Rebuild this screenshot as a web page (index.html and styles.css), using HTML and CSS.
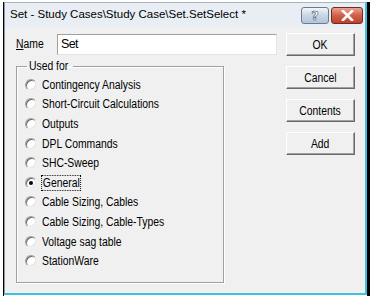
FILE: index.html
```html
<!DOCTYPE html>
<html lang="en">
<head>
    <meta charset="UTF-8">
    <title>Set Select</title>
    <link rel="stylesheet" href="styles.css">
</head>
<body>

    <div class="screen">
        <div class="edge-left"></div>

        <!-- Dialog window -->
        <div class="window">
            <div class="titlebar">
                <span class="title">Set - Study Cases\Study Case\Set.SetSelect *</span>
                <div class="caption-btns">
                    <button class="cap help-btn">?</button>
                    <button class="cap close-btn">
                        <svg width="13" height="11" viewBox="0 0 13 11">
                            <path d="M2 1 L11 10 M11 1 L2 10" stroke="#ffffff" stroke-width="2.6" stroke-linecap="square"/>
                        </svg>
                    </button>
                </div>
            </div>

            <div class="client">
                <div class="main-col">
                    <div class="name-row">
                        <label class="name-label"><span class="txt"><u>N</u>ame</span></label>
                        <input type="text" class="name-input" value="Set">
                    </div>

                    <fieldset class="group">
                        <legend><span class="txt">Used for</span></legend>
                        <div class="radio-row"><span class="radio"></span><span class="txt">Contingency Analysis</span></div>
                        <div class="radio-row"><span class="radio"></span><span class="txt">Short-Circuit Calculations</span></div>
                        <div class="radio-row"><span class="radio"></span><span class="txt">Outputs</span></div>
                        <div class="radio-row"><span class="radio"></span><span class="txt">DPL Commands</span></div>
                        <div class="radio-row"><span class="radio"></span><span class="txt">SHC-Sweep</span></div>
                        <div class="radio-row"><span class="radio checked"></span><span class="txt focus">General</span></div>
                        <div class="radio-row"><span class="radio"></span><span class="txt">Cable Sizing, Cables</span></div>
                        <div class="radio-row"><span class="radio"></span><span class="txt">Cable Sizing, Cable-Types</span></div>
                        <div class="radio-row"><span class="radio"></span><span class="txt">Voltage sag table</span></div>
                        <div class="radio-row"><span class="radio"></span><span class="txt">StationWare</span></div>
                    </fieldset>
                </div>

                <div class="btn-col">
                    <button class="btn"><span class="txt">OK</span></button>
                    <button class="btn"><span class="txt">Cancel</span></button>
                    <button class="btn"><span class="txt">Contents</span></button>
                    <button class="btn"><span class="txt">Add</span></button>
                </div>
            </div>
        </div>

        <div class="edge-right"></div>
    </div>

</body>
</html>
```

FILE: styles.css
```css
/* General */
body {
    margin: 0;
    width: 370px;
    height: 296px;
    overflow: hidden;
    background: #ffffff;
    font-family: 'Liberation Sans', sans-serif;
    font-size: 12.5px;
    color: #000000;
}

/* narrow dialog font */
.txt {
    display: inline-block;
    white-space: nowrap;
    transform: scaleX(0.83);
    transform-origin: left center;
}

.screen {
    display: flex;
    height: 296px;
    padding-top: 2px;
    box-sizing: border-box;
}

.edge-left {
    width: 3px;
    border-right: 1px solid #000000;
    background: #ffffff;
}

.edge-right {
    flex: 1;
    background: #000000;
}

/* Window frame */
.window {
    width: 363px;
    height: 293px;
    background: #f0f0f0;
    border: 1px solid #8c9aa8;
    border-top-color: #a8b4c0;
    border-right: 2px solid #40c0e0;
    border-bottom: 2px solid #40c0e0;
    box-sizing: border-box;
    display: flex;
    flex-direction: column;
}

.titlebar {
    height: 24px;
    background: #e9eef4;
    display: flex;
    align-items: flex-start;
    justify-content: space-between;
    padding-left: 5px;
}

.title {
    font-family: 'Liberation Sans', sans-serif;
    font-size: 11.5px;
    line-height: 22px;
    color: #000000;
}

.caption-btns {
    display: flex;
    gap: 2px;
    margin-top: 4px;
    margin-right: 2px;
}

.cap {
    height: 17px;
    border: 1px solid #6c7b8c;
    border-radius: 3px;
    padding: 0;
    display: flex;
    align-items: center;
    justify-content: center;
}

.help-btn {
    width: 28px;
    background: linear-gradient(#f0f5fa, #c8d6e6 50%, #b2c5da);
    color: #ffffff;
    font-family: 'DejaVu Sans', sans-serif;
    font-weight: bold;
    font-size: 13px;
    -webkit-text-stroke: 0.6px #4a5c70;
}

.close-btn {
    width: 32px;
    border-color: #6a2c24;
    background: linear-gradient(#e8a494, #d06048 50%, #c0402a);
}

/* Client area */
.client {
    flex: 1;
    display: flex;
    padding: 6px 0 0 11px;
}

.main-col {
    width: 261px;
}

.name-row {
    display: flex;
    align-items: center;
    height: 22px;
}

.name-label {
    width: 41px;
}

.name-input {
    width: 220px;
    height: 21px;
    box-sizing: border-box;
    border: 1px solid #a0a0a0;
    border-right-color: #e3e3e3;
    border-bottom-color: #e3e3e3;
    padding: 0 3px;
    font-family: inherit;
    font-size: inherit;
    letter-spacing: -0.6px;
    background: #ffffff;
}

/* Group box */
.group {
    width: 208px;
    height: 224px;
    box-sizing: border-box;
    margin: 4px 0 0 0;
    padding: 2px 0 0 8px;
    border: 1px solid #a0a0a0;
    box-shadow: 1px 1px 0 #ffffff, inset 1px 1px 0 #ffffff;
}

.group legend {
    padding: 0 2px;
    margin-left: 2px;
    line-height: 14px;
    width: 42px;
}

.radio-row {
    display: flex;
    align-items: center;
    height: 19.6px;
    gap: 5px;
}

.radio {
    width: 12px;
    height: 12px;
    box-sizing: border-box;
    border-radius: 50%;
    background: #ffffff;
    border: 1px solid #a0a0a0;
    border-right-color: #f0f0f0;
    border-bottom-color: #f0f0f0;
    box-shadow: inset 1px 1px 0 #696969, inset -1px -1px 0 #e3e3e3;
    position: relative;
}

.radio.checked::after {
    content: "";
    position: absolute;
    left: 3px;
    top: 3px;
    width: 4px;
    height: 4px;
    border-radius: 50%;
    background: #000000;
}

.focus {
    outline: 1px dotted #000000;
    padding: 0 1px;
}

/* Buttons */
.btn-col {
    display: flex;
    flex-direction: column;
    gap: 10px;
    margin-left: 9px;
}

.btn {
    width: 69px;
    height: 23px;
    background: #f0f0f0;
    font-family: inherit;
    font-size: inherit;
    border: 1px solid #ffffff;
    border-right-color: #696969;
    border-bottom-color: #696969;
    box-shadow: inset -1px -1px 0 #a0a0a0;
    padding: 0;
}

.btn .txt {
    transform-origin: center;
}
```
